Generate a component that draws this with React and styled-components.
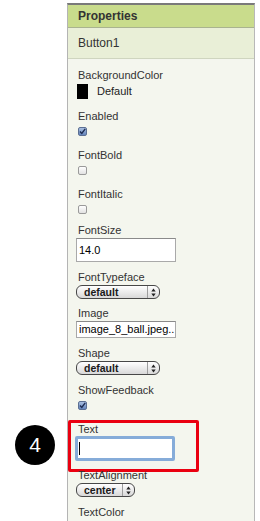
import React from "react";
import styled, { createGlobalStyle } from "styled-components";

const Global = createGlobalStyle`
  html, body { margin: 0; padding: 0; background: #ffffff; }
  body { font-family: "Liberation Sans", Arial, sans-serif; }
`;

const Page = styled.div`
  position: relative;
  width: 260px;
  height: 521px;
  overflow: hidden;
  background: #fff;
`;

const Panel = styled.div`
  margin: 3px 0 0 67px;
  width: 186px;
  height: 530px;
  border-top: 2px solid #7a7a7a;
  border-left: 1px solid #b4b4b4;
  border-right: 1px solid #b8b8b8;
  background: #f4f6ee;
  display: flex;
  flex-direction: column;
`;

const Header = styled.div`
  height: 22px;
  display: flex;
  align-items: center;
  padding-left: 10px;
  background: #c9dc8c;
  border-bottom: 1px solid #a9b38f;
  font-weight: bold;
  font-size: 12px;
  color: #333;
`;

const SubHeader = styled.div`
  height: 30px;
  display: flex;
  align-items: center;
  padding-left: 10px;
  background: #e9efd7;
  border-bottom: 1px solid #cfd5bf;
  font-size: 12px;
  color: #333;
`;

const Content = styled.div`
  padding: 9px 0 0 10px;
  display: flex;
  flex-direction: column;
`;

const Prop = styled.div`
  position: relative;
  display: flex;
  flex-direction: column;
  align-items: flex-start;
  margin-bottom: ${(p) => p.$gap ?? 8}px;
`;

const Label = styled.div`
  font-size: 11px;
  line-height: 14px;
  height: 14px;
  color: #333;
  white-space: nowrap;
`;

const SwatchRow = styled.div`
  margin: 2px 0 0 -1px;
  height: 17px;
  display: flex;
  align-items: flex-start;
  gap: 9px;
  font-size: 11px;
  color: #222;
`;

const Swatch = styled.div`
  width: 11px;
  height: 15px;
  background: #000;
`;

const SwatchText = styled.span`
  line-height: 15px;
`;

const Check = styled.div`
  margin: 4px 0 4px 0;
  width: 9px;
  height: 9px;
  box-sizing: border-box;
  border-radius: 2px;
  border: 1px solid ${(p) => (p.$checked ? "#5b6f93" : "#9a9a9a")};
  background: ${(p) =>
    p.$checked
      ? "linear-gradient(#a9bfe0, #6485bc)"
      : "linear-gradient(#ffffff, #e2e2e2)"};
  display: flex;
  align-items: center;
  justify-content: center;
`;

const TextBox = styled.div`
  margin: 1px 0 0 -2px;
  width: 100px;
  height: ${(p) => p.$h}px;
  box-sizing: border-box;
  border: 1px solid #a9a9a9;
  border-top-color: #8a8a8a;
  background: #fff;
  padding-left: 2px;
  font-size: 11px;
  line-height: ${(p) => p.$h - 2}px;
  color: #000;
  white-space: nowrap;
  overflow: hidden;
`;

const FocusBox = styled.div`
  margin: 0 0 0 -3px;
  width: 100px;
  height: 25px;
  box-sizing: border-box;
  border: 3px solid #86acd9;
  border-radius: 2px;
  background: #fff;
  display: flex;
  align-items: center;
  padding-left: 1px;
`;

const Caret = styled.div`
  width: 1px;
  height: 13px;
  background: #000;
`;

const Select = styled.div`
  margin: 1px 0 0 -2px;
  width: ${(p) => p.$w}px;
  height: 14px;
  box-sizing: border-box;
  border: 1px solid #474747;
  border-radius: 6px;
  background: linear-gradient(#ffffff, #e8e8e8 60%, #d8d8d8);
  display: flex;
  align-items: stretch;
`;

const SelectText = styled.div`
  flex: 1;
  padding-left: 7px;
  font-size: 10.5px;
  font-weight: bold;
  line-height: 12px;
  color: #1a1a1a;
  border-right: 1px solid #9d9d9d;
`;

const SelectArrows = styled.div`
  width: 11px;
  display: flex;
  align-items: center;
  justify-content: center;
`;

const Highlight = styled.div`
  position: absolute;
  left: -10px;
  top: -2px;
  width: 131px;
  height: 52px;
  box-sizing: border-box;
  border: 3px solid #ea0010;
  border-radius: 2px;
  pointer-events: none;
`;

const Badge = styled.div`
  position: absolute;
  left: 15px;
  top: 425px;
  width: 40px;
  height: 40px;
  border-radius: 50%;
  background: #000;
  color: #fff;
  display: flex;
  align-items: center;
  justify-content: center;
  font-size: 21px;
  font-family: "Liberation Sans", Arial, sans-serif;
`;

const CheckMark = () => (
  <svg width="7" height="7" viewBox="0 0 7 7">
    <path d="M1 3.6 L2.8 5.4 L6.2 0.8" fill="none" stroke="#1d2c52" strokeWidth="1.4" />
  </svg>
);

const Arrows = () => (
  <svg width="5" height="9" viewBox="0 0 5 9">
    <path d="M2.5 0.5 L4.7 3.5 L0.3 3.5 Z" fill="#222" />
    <path d="M2.5 8.5 L4.7 5.5 L0.3 5.5 Z" fill="#222" />
  </svg>
);

const Dropdown = ({ value, w }) => (
  <Select $w={w}>
    <SelectText>{value}</SelectText>
    <SelectArrows>
      <Arrows />
    </SelectArrows>
  </Select>
);

export default function App() {
  return (
    <Page>
      <Global />
      <Panel>
        <Header>Properties</Header>
        <SubHeader>Button1</SubHeader>
        <Content>
          <Prop>
            <Label>BackgroundColor</Label>
            <SwatchRow>
              <Swatch />
              <SwatchText>Default</SwatchText>
            </SwatchRow>
          </Prop>
          <Prop>
            <Label>Enabled</Label>
            <Check $checked>
              <CheckMark />
            </Check>
          </Prop>
          <Prop>
            <Label>FontBold</Label>
            <Check />
          </Prop>
          <Prop $gap={5}>
            <Label>FontItalic</Label>
            <Check />
          </Prop>
          <Prop>
            <Label>FontSize</Label>
            <TextBox $h={24}>14.0</TextBox>
          </Prop>
          <Prop $gap={7}>
            <Label>FontTypeface</Label>
            <Dropdown value="default" w={84} />
          </Prop>
          <Prop>
            <Label>Image</Label>
            <TextBox $h={17}>image_8_ball.jpeg..</TextBox>
          </Prop>
          <Prop>
            <Label>Shape</Label>
            <Dropdown value="default" w={84} />
          </Prop>
          <Prop>
            <Label>ShowFeedback</Label>
            <Check $checked>
              <CheckMark />
            </Check>
          </Prop>
          <Prop $gap={7}>
            <Label>Text</Label>
            <FocusBox>
              <Caret />
            </FocusBox>
            <Highlight />
          </Prop>
          <Prop>
            <Label>TextAlignment</Label>
            <Dropdown value="center" w={59} />
          </Prop>
          <Prop>
            <Label>TextColor</Label>
          </Prop>
        </Content>
      </Panel>
      <Badge>4</Badge>
    </Page>
  );
}
